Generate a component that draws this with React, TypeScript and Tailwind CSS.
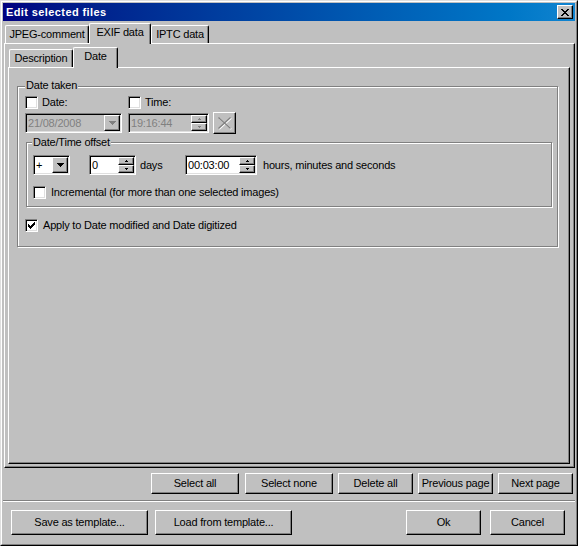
import type { ReactNode } from 'react'

const RAISED = 'border border-white border-r-black border-b-black shadow-[inset_-1px_-1px_0_#808080]'
const SUNKEN =
  'border border-[#808080] border-r-white border-b-white shadow-[inset_1px_1px_0_#000,inset_-1px_-1px_0_#dfdfdf]'
const ETCHED = 'border border-[#808080] shadow-[1px_1px_0_#fff,inset_1px_1px_0_#fff]'

const CHECK = ['......X', '.....XX', 'X...XXX', 'XX.XXX.', 'XXXXX..', '.XXX...', '..X....']
const ARROW_DOWN = ['XXXXXXX', '.XXXXX.', '..XXX..', '...X...']
const SPIN_UP = ['.X.', 'XXX']
const SPIN_DOWN = ['XXX', '.X.']
const CLOSE = ['XX....XX', '.XX..XX.', '..XXXX..', '...XX...', '..XXXX..', '.XX..XX.', 'XX....XX']

/** Tiny pixel glyphs (check marks, arrows) drawn cell by cell. */
function Pixels({ rows, color = '#000' }: { rows: string[]; color?: string }) {
  const w = rows[0].length
  const h = rows.length
  return (
    <svg width={w} height={h} viewBox={`0 0 ${w} ${h}`} shapeRendering="crispEdges" className="block">
      {rows.flatMap((row, y) =>
        row
          .split('')
          .map((c, x) => (c === 'X' ? <rect key={`${x}-${y}`} x={x} y={y} width={1} height={1} fill={color} /> : null)),
      )}
    </svg>
  )
}

function Checkbox({ checked = false }: { checked?: boolean }) {
  return (
    <span className={`flex h-[13px] w-[13px] shrink-0 items-center justify-center bg-white ${SUNKEN}`}>
      {checked && <Pixels rows={CHECK} />}
    </span>
  )
}

function CheckRow({ label, checked, gap }: { label: string; checked?: boolean; gap: string }) {
  return (
    <label className={`flex items-center ${gap}`}>
      <Checkbox checked={checked} />
      <span className="leading-[13px]">{label}</span>
    </label>
  )
}

function Button({ children, className }: { children: ReactNode; className: string }) {
  return (
    <button
      type="button"
      className={`flex items-center justify-center bg-[#c0c0c0] leading-[13px] tracking-[-0.2px] text-black ${RAISED} ${className}`}
    >
      {children}
    </button>
  )
}

function Combo({ value, disabled, className }: { value: string; disabled?: boolean; className: string }) {
  return (
    <div className={`flex h-[20px] p-[1px] ${disabled ? 'bg-[#c0c0c0]' : 'bg-white'} ${SUNKEN} ${className}`}>
      <span className={`flex-1 pl-[1px] leading-[16px] ${disabled ? 'text-[#808080]' : 'text-black'}`}>{value}</span>
      <span className={`flex h-[16px] w-[16px] items-center justify-center bg-[#c0c0c0] ${RAISED}`}>
        <Pixels rows={ARROW_DOWN} color={disabled ? '#808080' : '#000'} />
      </span>
    </div>
  )
}

function SpinField({ value, disabled, className }: { value: string; disabled?: boolean; className: string }) {
  return (
    <div className={`flex h-[20px] p-[1px] ${disabled ? 'bg-[#c0c0c0]' : 'bg-white'} ${SUNKEN} ${className}`}>
      <span className={`flex-1 pl-[1px] leading-[16px] ${disabled ? 'text-[#808080]' : 'text-black'}`}>{value}</span>
      <span className="flex w-[16px] flex-col">
        <span className={`flex h-[8px] items-center justify-center bg-[#c0c0c0] ${RAISED}`}>
          <Pixels rows={SPIN_UP} color={disabled ? '#808080' : '#000'} />
        </span>
        <span className={`flex h-[8px] items-center justify-center bg-[#c0c0c0] ${RAISED}`}>
          <Pixels rows={SPIN_DOWN} color={disabled ? '#808080' : '#000'} />
        </span>
      </span>
    </div>
  )
}

function Tab({ label, active, className }: { label: string; active?: boolean; className: string }) {
  return (
    <div
      className={`flex items-center justify-center rounded-t-[2px] border-l border-t border-r border-white border-r-black bg-[#c0c0c0] shadow-[inset_-1px_0_0_#808080] ${
        active ? 'relative z-10 -mb-px h-[21px] pb-[3px]' : 'h-[18px]'
      } ${className}`}
    >
      {label}
    </div>
  )
}

function GroupLabel({ children, className }: { children: ReactNode; className: string }) {
  return <span className={`absolute bg-[#c0c0c0] px-[1px] leading-[13px] ${className}`}>{children}</span>
}

export default function App() {
  return (
    <div className="h-[546px] w-[578px] border border-[#dfdfdf] border-r-black border-b-black bg-[#c0c0c0] font-['Liberation_Sans',Arial,sans-serif] text-[11px] text-black">
      <div className="flex h-full flex-col border border-white border-r-[#808080] border-b-[#808080] p-[1px]">
        {/* title bar */}
        <div className="flex h-[18px] shrink-0 items-center justify-between bg-gradient-to-r from-[#000080] to-[#1084d0] pl-[3px] pr-[2px]">
          <span className="text-[11px] font-bold tracking-[0.4px] text-white">Edit selected files</span>
          <span className={`flex h-[14px] w-[16px] items-center justify-center bg-[#c0c0c0] ${RAISED}`}>
            <Pixels rows={CLOSE} />
          </span>
        </div>

        {/* outer tab control */}
        <div className="ml-[1px] mt-[2px] w-[571px] tracking-[-0.2px]">
          <div className="flex h-[20px] items-end pl-[1px]">
            <Tab label="JPEG-comment" className="w-[84px]" />
            <Tab label="EXIF data" active className="w-[62px]" />
            <Tab label="IPTC data" className="w-[58px]" />
          </div>
          <div className={`h-[425px] w-[571px] pl-[3px] pt-[3px] ${RAISED}`}>
            {/* inner tab control */}
            <div className="flex h-[20px] items-end pl-[1px]">
              <Tab label="Description" className="w-[64px]" />
              <Tab label="Date" active className="w-[45px]" />
            </div>
            <div className={`h-[397px] w-[562px] pl-[8px] pt-[18px] ${RAISED}`}>
              {/* Date taken */}
              <div className={`relative h-[161px] w-[541px] ${ETCHED}`}>
                <GroupLabel className="left-[7px] top-[-8px]">Date taken</GroupLabel>
                <div className="mt-[9px] flex h-[13px] items-center pl-[7px]">
                  <div className="w-[103px]">
                    <CheckRow label="Date:" gap="gap-[4px]" />
                  </div>
                  <CheckRow label="Time:" gap="gap-[4px]" />
                </div>
                <div className="mt-[3px] flex h-[22px] items-center pl-[7px]">
                  <Combo value="21/08/2008" disabled className="w-[97px]" />
                  <SpinField value="19:16:44" disabled className="ml-[6px] w-[81px]" />
                  <span className={`ml-[4px] flex h-[22px] w-[23px] items-center justify-center bg-[#c0c0c0] ${RAISED}`}>
                    <svg width="17" height="16" viewBox="0 0 17 16" className="block">
                      <path d="M2.5 2.5 L14.5 13.5 M14.5 2.5 L2.5 13.5" stroke="#fff" strokeWidth="1.2" transform="translate(0.8 0.8)" />
                      <path d="M2.5 2.5 L14.5 13.5 M14.5 2.5 L2.5 13.5" stroke="#808080" strokeWidth="1.3" />
                    </svg>
                  </span>
                </div>

                {/* Date/Time offset */}
                <div className={`relative ml-[8px] mt-[8px] h-[65px] w-[526px] ${ETCHED}`}>
                  <GroupLabel className="left-[5px] top-[-7px]">Date/Time offset</GroupLabel>
                  <div className="mt-[12px] flex h-[20px] items-center pl-[6px]">
                    <Combo value="+" className="w-[37px]" />
                    <SpinField value="0" className="ml-[19px] w-[47px]" />
                    <span className="ml-[4px] w-[45px] leading-[13px]">days</span>
                    <SpinField value="00:03:00" className="w-[72px]" />
                    <span className="ml-[6px] leading-[13px]">hours, minutes and seconds</span>
                  </div>
                  <div className="mt-[11px] pl-[6px]">
                    <CheckRow label="Incremental (for more than one selected images)" gap="gap-[5px]" />
                  </div>
                </div>

                <div className="mt-[12px] pl-[7px]">
                  <CheckRow label="Apply to Date modified and Date digitized" checked gap="gap-[5px]" />
                </div>
              </div>
            </div>
          </div>
        </div>

        {/* page buttons */}
        <div className="mt-[5px] flex h-[21px] justify-end gap-[5px] pr-[2px]">
          <Button className="mr-[1px] w-[88px]">Select all</Button>
          <Button className="w-[88px]">Select none</Button>
          <Button className="w-[75px]">Delete all</Button>
          <Button className="w-[75px]">Previous page</Button>
          <Button className="w-[75px]">Next page</Button>
        </div>

        <div className="mt-[6px] h-[2px] border-t border-b border-t-[#808080] border-b-white" />

        {/* dialog buttons */}
        <div className="mt-[8px] flex h-[25px] pr-[10px]">
          <Button className="ml-[8px] w-[137px]">Save as template...</Button>
          <Button className="ml-[7px] w-[137px]">Load from template...</Button>
          <Button className="ml-auto w-[75px]">Ok</Button>
          <Button className="ml-[9px] w-[75px]">Cancel</Button>
        </div>
      </div>
    </div>
  )
}
